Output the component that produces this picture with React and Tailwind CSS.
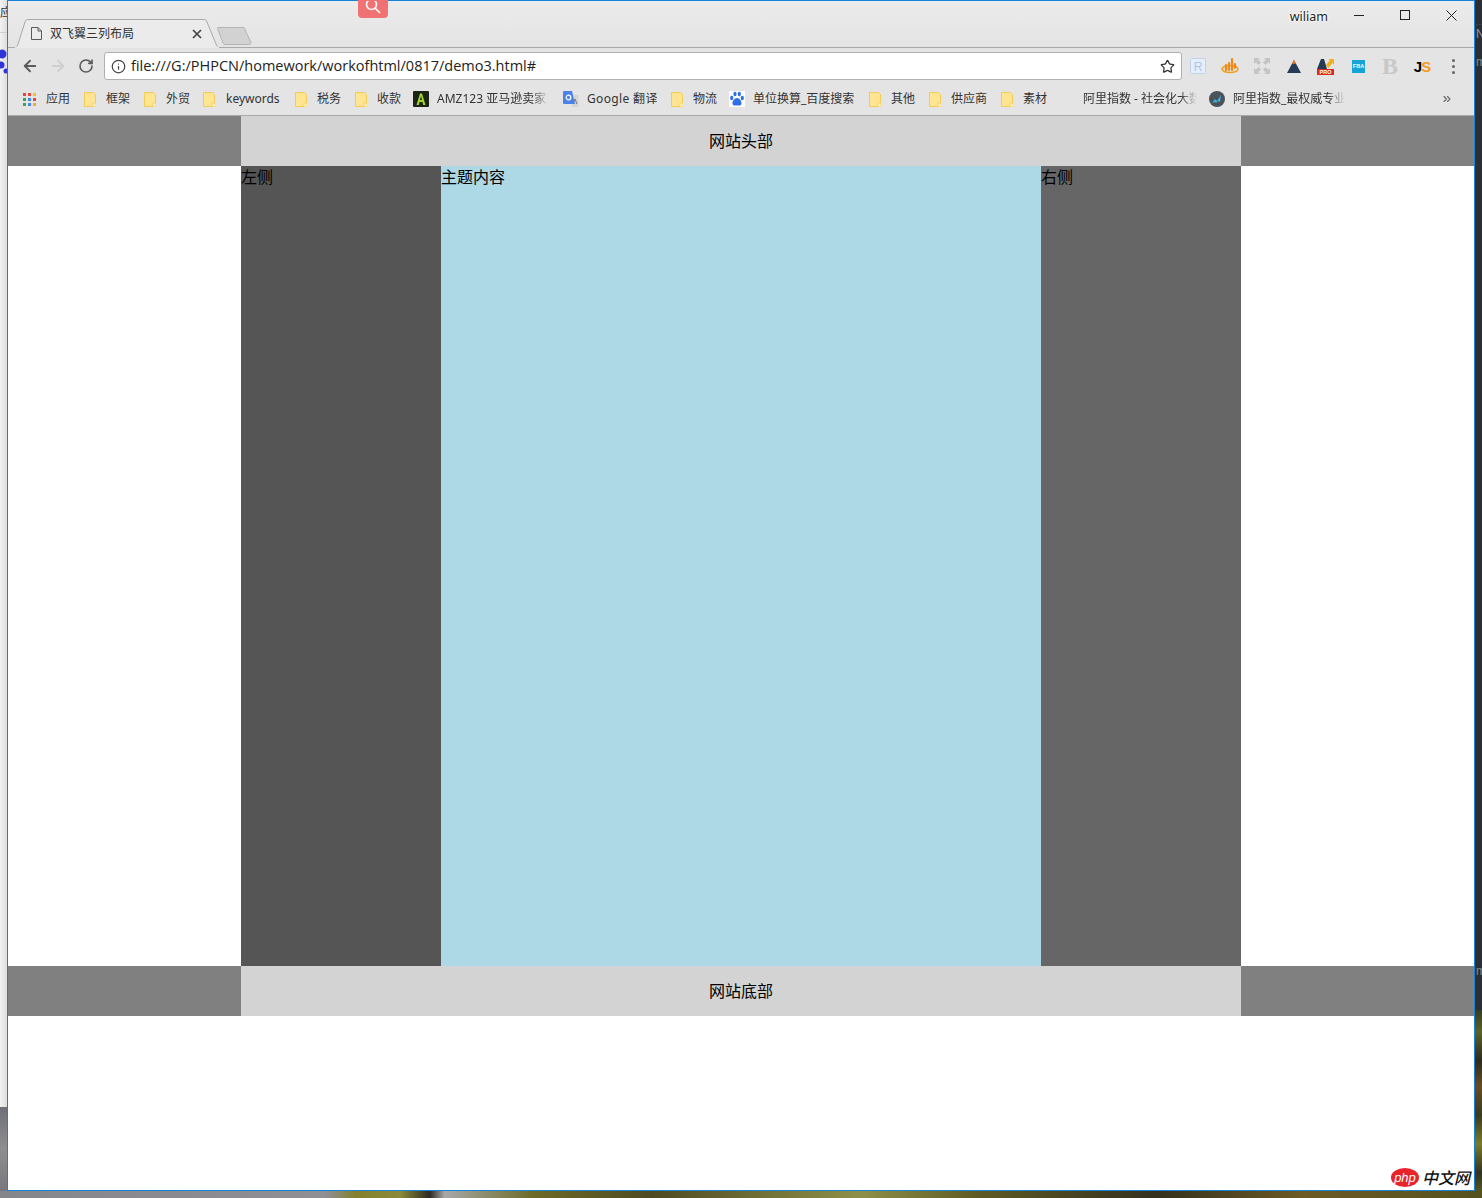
import React from 'react';
import { ArrowLeft, ArrowRight, RotateCw, Info, Star, ChevronsRight } from 'lucide-react';

const BOOKMARKS = [
  { icon: 'apps', label: '应用', ml: 'ml-[15px]', w: 'w-[24px]', gap: 'ml-[10px]' },
  { icon: 'folder', label: '框架', ml: 'ml-[14px]', w: 'w-[24px]', gap: 'ml-[10px]' },
  { icon: 'folder', label: '外贸', ml: 'ml-[14px]', w: 'w-[24px]', gap: 'ml-[10px]' },
  { icon: 'folder', label: 'keywords', ml: 'ml-[13px]', w: 'w-[55px]', gap: 'ml-[11px]' },
  { icon: 'folder', label: '税务', ml: 'ml-[14px]', w: 'w-[24px]', gap: 'ml-[10px]' },
  { icon: 'folder', label: '收款', ml: 'ml-[14px]', w: 'w-[24px]', gap: 'ml-[10px]' },
  { icon: 'amz', label: 'AMZ123 亚马逊卖家', ml: 'ml-[12px]', w: 'w-[112px]', gap: 'ml-[8px]', fade: true },
  { icon: 'translate', label: 'Google 翻译', ml: 'ml-[14px]', w: 'w-[70px]', gap: 'ml-[8px]', extra: 'tracking-[0.35px]' },
  { icon: 'folder', label: '物流', ml: 'ml-[14px]', w: 'w-[24px]', gap: 'ml-[10px]' },
  { icon: 'paw', label: '单位换算_百度搜索', ml: 'ml-[12px]', w: 'w-[102px]', gap: 'ml-[8px]' },
  { icon: 'folder', label: '其他', ml: 'ml-[14px]', w: 'w-[24px]', gap: 'ml-[10px]' },
  { icon: 'folder', label: '供应商', ml: 'ml-[14px]', w: 'w-[36px]', gap: 'ml-[10px]' },
  { icon: 'folder', label: '素材', ml: 'ml-[14px]', w: 'w-[24px]', gap: 'ml-[10px]' },
  { icon: 'blank', label: '阿里指数 - 社会化大数', ml: 'ml-[12px]', w: 'w-[114px]', gap: 'ml-[8px]', fade: true },
  { icon: 'ali', label: '阿里指数_最权威专业', ml: 'ml-[12px]', w: 'w-[112px]', gap: 'ml-[8px]', fade: true },
];

const APP_DOTS = [
  'bg-[#e8453c]', 'bg-[#e8453c]', 'bg-[#f9bb2d]',
  'bg-[#34a853]', 'bg-[#4285f4]', 'bg-[#e8453c]',
  'bg-[#34a853]', 'bg-[#4285f4]', 'bg-[#f9a825]',
];

function Folder() {
  return (
    <svg width="12" height="15" viewBox="0 0 12 15" className="shrink-0">
      <path d="M.5.5h9l2 2v12H.5z" fill="#ffe592" stroke="#f3cb55" />
      <rect x="9" y="11" width="3" height="4" fill="#fff3c4" stroke="#f3cb55" strokeWidth=".8" />
    </svg>
  );
}

function BookmarkIcon({ type }) {
  if (type === 'folder') return <span className="flex w-[12px] shrink-0"><Folder /></span>;
  if (type === 'apps') {
    return (
      <span className="grid h-[13px] w-[13px] shrink-0 grid-cols-3 gap-[2px]">
        {APP_DOTS.map((c, i) => <span key={i} className={`h-[3px] w-[3px] ${c}`} />)}
      </span>
    );
  }
  if (type === 'amz') {
    return (
      <svg width="16" height="16" viewBox="0 0 16 16" className="shrink-0">
        <rect width="16" height="16" rx="1" fill="#1c2416" />
        <path d="M3.5 14 7 2.500h2L12.500 14h-2.300L9.500 11h-3l-.7 3zM7 9h2L8 5z" fill="#a4d52c" />
      </svg>
    );
  }
  if (type === 'translate') {
    return (
      <svg width="16" height="16" viewBox="0 0 16 16" className="shrink-0">
        <path d="M7 4h8.500v12H9z" fill="#d5d5d5" />
        <path d="M12 8l-2 5M12 8l2 5" stroke="#777" strokeWidth="1" />
        <path d="M1 0h8l3 13H1a1 1 0 0 1-1-1V1a1 1 0 0 1 1-1z" fill="#4a82e8" />
        <circle cx="5.500" cy="6.500" r="2.300" fill="none" stroke="#fff" strokeWidth="1.200" />
      </svg>
    );
  }
  if (type === 'paw') {
    return (
      <svg width="16" height="16" viewBox="0 0 16 16" className="shrink-0">
        <rect width="16" height="16" fill="#fff" />
        <ellipse cx="6" cy="3" rx="1.600" ry="2.200" fill="#2f6fe8" />
        <ellipse cx="10.300" cy="3" rx="1.600" ry="2.200" fill="#2f6fe8" />
        <ellipse cx="2.700" cy="7" rx="1.600" ry="2.200" fill="#2f6fe8" />
        <ellipse cx="13.300" cy="7" rx="1.600" ry="2.200" fill="#2f6fe8" />
        <path d="M8 7c-2.500 0-5 3.500-4.500 5.800C4 15 6.500 14.500 8 14.500s4 .5 4.500-1.700C13 10.500 10.500 7 8 7z" fill="#2f6fe8" />
      </svg>
    );
  }
  if (type === 'ali') {
    return (
      <svg width="16" height="16" viewBox="0 0 16 16" className="shrink-0">
        <circle cx="8" cy="8" r="8" fill="#4b5358" />
        <path d="M3 12l3-4 2 2 4-6-1 7-2-1-2 2-1-1z" fill="#35b5e5" />
      </svg>
    );
  }
  return <span className="w-[16px] shrink-0" />;
}

function Extension({ children }) {
  return <div className="flex h-[32px] w-8 items-center justify-center">{children}</div>;
}

function Extensions() {
  return (
    <>
      <Extension>
        <svg width="16" height="16" viewBox="0 0 16 16">
          <rect x=".5" y=".5" width="15" height="15" rx="1" fill="#e6eefb" stroke="#bcd2ee" />
          <text x="8" y="12.500" textAnchor="middle" fontSize="12" fontFamily="Liberation Sans" fill="#a9c6ee">R</text>
        </svg>
      </Extension>
      <Extension>
        <svg width="18" height="18" viewBox="0 0 18 18">
          <ellipse cx="9" cy="12" rx="8" ry="3.500" fill="none" stroke="#f0a021" strokeWidth="1.600" />
          <path d="M5 13V8M8 13V6M11 13V2M14 11V7" stroke="#f0891a" strokeWidth="2.200" strokeLinecap="round" />
        </svg>
      </Extension>
      <Extension>
        <svg width="16" height="16" viewBox="0 0 16 16" fill="#c4c4c4">
          <path d="M0 0h6L4.200 1.800 7 4.600 4.600 7 1.800 4.200 0 6zM16 0v6l-1.800-1.800L11.400 7 9 4.600l2.800-2.800L10 0zM0 16v-6l1.800 1.800L4.600 9 7 11.400l-2.800 2.800L6 16zM16 16h-6l1.800-1.800L9 11.400 11.400 9l2.800 2.800L16 10z" />
        </svg>
      </Extension>
      <Extension>
        <svg width="14" height="13" viewBox="0 0 14 13">
          <path d="M7 0l7 13H0z" fill="#263a55" />
          <path d="M7 0l2 3.800H5z" fill="#f0792a" />
        </svg>
      </Extension>
      <Extension>
        <svg width="18" height="18" viewBox="0 0 18 18">
          <path d="M0 12L4 2h3l3 10z" fill="#263a55" />
          <path d="M9 8l4-5-2-1h6v6l-1.500-2-4 5z" fill="#f2b01e" />
          <rect y="12" width="17" height="6" fill="#d9281c" />
          <text x="8.500" y="17" textAnchor="middle" fontSize="5.500" fontWeight="700" fontFamily="Liberation Sans" fill="#fff">PRO</text>
        </svg>
      </Extension>
      <Extension>
        <svg width="13" height="13" viewBox="0 0 13 13">
          <rect width="13" height="13" fill="#16a3d8" />
          <text x="6.500" y="7.500" textAnchor="middle" fontSize="5.500" fontWeight="700" fontFamily="Liberation Sans" fill="#fff">FBA</text>
        </svg>
      </Extension>
      <Extension>
        <span className="font-['Liberation_Serif',serif] text-[24px] font-bold leading-none text-[#c8c8c8]">B</span>
      </Extension>
      <Extension>
        <span className="font-['Liberation_Sans',sans-serif] text-[15px] font-bold leading-none tracking-[-1px] text-black">J<span className="text-[#f49b1b]">S</span></span>
      </Extension>
    </>
  );
}

function TitleBar() {
  return (
    <div className="flex h-[47px] bg-gradient-to-b from-[#ebebeb] to-[#e4e4e4] border-b border-[#a9a9a9]">
      <div className="relative ml-[6px] mt-[18px] flex h-[29px] w-[206px] items-center">
        <svg width="206" height="29" viewBox="0 0 206 29" className="absolute left-0 top-0">
          <path d="M0 28.500C2 28.500 3 28 4 25L11 3C11.500 1.500 12.500 .5 14 .5H190C191.500 .5 192.500 1.500 193 3L202 25C203 28 204 28.500 206 28.500Z" fill="#ebebeb" stroke="#a9a9a9" />
          <path d="M1 28.500H205" stroke="#ebebeb" strokeWidth="1.500" />
        </svg>
        <svg width="11" height="13" viewBox="0 0 11 13" fill="none" stroke="#5a5a5a" className="relative ml-[17px]">
          <path d="M.5.5h6.500l3.500 3.500v8.500H.5zM7 .5V4h3.500" />
        </svg>
        <span className="relative ml-[8px] w-[90px] whitespace-nowrap text-[12px] leading-none text-[#333]">双飞翼三列布局</span>
        <svg width="10" height="10" viewBox="0 0 10 10" stroke="#444" strokeWidth="1.700" className="relative ml-[52px]">
          <path d="M1 1l8 8M9 1l-8 8" />
        </svg>
      </div>
      <svg width="36" height="18" viewBox="0 0 36 18" className="ml-[-4px] mt-[26px]">
        <path d="M1.500 1.500Q1 .5 3 .5H28L35 15.500Q35 17.500 33 17.500H9Q7.500 17.500 7 16Z" fill="#d2d2d2" stroke="#b4b4b4" />
      </svg>
      <div className="ml-auto flex items-start">
        <span className="mt-[9px] font-['Noto_Sans',sans-serif] text-[12.5px] leading-[14px] text-[#222] [text-shadow:0_0_2px_#fff,0_0_3px_#fff,0_0_3px_#fff]">wiliam</span>
        <svg width="11" height="11" viewBox="0 0 11 11" stroke="#222" className="ml-[26px] mt-[9px]"><path d="M0 5.500h10" /></svg>
        <svg width="11" height="11" viewBox="0 0 11 11" fill="none" stroke="#222" className="ml-[35px] mt-[9px]"><rect x=".5" y=".5" width="9" height="9" /></svg>
        <svg width="11" height="11" viewBox="0 0 11 11" stroke="#222" className="ml-[35px] mr-[17px] mt-[9px]"><path d="M.5.5l10 10M10.500.5l-10 10" /></svg>
      </div>
    </div>
  );
}

function Toolbar() {
  return (
    <div className="flex h-[34px] items-center bg-[#e4e4e4] pl-2 pt-[2px]">
      <button className="flex w-7 justify-center text-[#5a5a5a]"><ArrowLeft size={18} strokeWidth={2.4} /></button>
      <button className="flex w-7 justify-center text-[#cfcfcf]"><ArrowRight size={18} strokeWidth={2.4} /></button>
      <button className="flex w-7 justify-center text-[#5a5a5a]"><RotateCw size={16} strokeWidth={2.4} /></button>
      <div className="ml-1 flex h-[28px] w-[1078px] items-center rounded-[3px] border border-[#b0b0b0] bg-white pl-[6px] pr-[6px]">
        <Info size={15} strokeWidth={2} className="text-[#444]" />
        <span className="ml-[5px] font-['Open_Sans',sans-serif] text-[14.5px] leading-none text-[#222]">file:///G:/PHPCN/homework/workofhtml/0817/demo3.html#</span>
        <Star size={15} strokeWidth={2} className="ml-auto text-[#333]" />
      </div>
      <Extensions />
      <div className="flex w-[30px] flex-col items-center gap-[3px]">
        <span className="h-[3px] w-[3px] rounded-full bg-[#666]" />
        <span className="h-[3px] w-[3px] rounded-full bg-[#666]" />
        <span className="h-[3px] w-[3px] rounded-full bg-[#666]" />
      </div>
    </div>
  );
}

function Bookmarks() {
  return (
    <div className="flex h-[34px] items-center border-b border-[#a9a9a9] bg-[#e4e4e4] pt-[1px]">
      {BOOKMARKS.map((b) => (
        <div key={b.label} className={`flex items-center ${b.ml}`}>
          <BookmarkIcon type={b.icon} />
          <span
            className={`overflow-hidden whitespace-nowrap text-[12px] leading-[16px] text-[#333] ${b.w} ${b.gap} ${b.extra || ''} ${b.fade ? '[mask-image:linear-gradient(to_right,#000_85%,transparent)]' : ''}`}
          >
            {b.label}
          </span>
        </div>
      ))}
      <ChevronsRight size={12} strokeWidth={2.2} className="ml-[96px] text-[#666]" />
    </div>
  );
}

function PageBand({ label }) {
  return (
    <div className="flex h-[50px] justify-center bg-[#808080]">
      <div className="w-[1000px] bg-[#d3d3d3] text-center leading-[50px]">{label}</div>
    </div>
  );
}

function Page() {
  return (
    <div className="relative flex-1 bg-white text-[16px] text-black">
      <PageBand label="网站头部" />
      <div className="mx-auto flex h-[800px] w-[1000px] leading-[22px]">
        <div className="w-[200px] bg-[#555555]">左侧</div>
        <div className="flex-1 bg-[#add8e6]">主题内容</div>
        <div className="w-[200px] bg-[#666666]">右侧</div>
      </div>
      <PageBand label="网站底部" />
      {/* site watermark in the corner of the shot */}
      <div className="absolute bottom-[3px] right-[4px] flex items-center">
        <span className="flex h-[19px] w-[28px] items-center justify-center rounded-[50%] bg-[#e8232a] font-['Liberation_Sans',sans-serif] text-[13px] italic leading-none text-white">php</span>
        <span className="ml-[3px] text-[16px] font-medium italic leading-none text-[#111]">中文网</span>
      </div>
    </div>
  );
}

export default function App() {
  return (
    <div className="flex h-[1198px] w-[1482px] flex-col overflow-hidden font-['Noto_Sans','Noto_Sans_CJK_SC',sans-serif]">
      <div className="flex h-[1191px]">
        {/* edge of the window behind, left */}
        <div className="flex w-[7px] flex-col overflow-hidden bg-gradient-to-r from-[#f2f2f2] to-[#dedede]">
          <div className="h-[33px] whitespace-nowrap border-b border-[#cfcfcf] pt-[5px] text-[12px] leading-[16px] text-[#333]">应</div>
          <svg width="7" height="28" viewBox="0 0 7 28" className="mt-[14px] shrink-0" fill="#2f35d8">
            <circle cx="2" cy="7" r="4.500" />
            <circle cx="1" cy="18" r="3.500" />
            <circle cx="6" cy="24" r="2.500" />
          </svg>
          <div className="mt-auto h-[84px] bg-[linear-gradient(to_bottom,#6f6f78,#8d8d92_50%,#77777e)]" />
        </div>

        <div className="flex w-[1468px] flex-col border border-[#1683d8]">
          <TitleBar />
          <Toolbar />
          <Bookmarks />
          <Page />
          <div className="absolute left-[358px] top-0 flex h-[18px] w-[30px] items-center justify-center rounded-b-[4px] bg-[#f07272]">
            <svg width="16" height="16" viewBox="0 0 16 16" fill="none" stroke="#fff" strokeWidth="1.600"><circle cx="6.500" cy="3.500" r="5" /><path d="M10 7l5 5" /></svg>
          </div>
        </div>

        {/* edge of the window behind, right */}
        <div className="flex w-[7px] flex-col overflow-hidden bg-[#2c2e31]">
          <div className="h-[1010px] pl-[1px] font-['Liberation_Sans',sans-serif] leading-none">
            <div className="h-[25px] border-b border-[#3a3c40]" />
            <div className="mt-[3px] text-[12px] text-[#8a97a8]">N</div>
            <div className="mt-[16px] text-[12px] text-[#8a8a80]">m</div>
            <div className="mt-[897px] text-[12px] text-[#8a8a80]">m</div>
          </div>
          <div className="flex-1 bg-[linear-gradient(to_bottom,#3a3a20,#5c6226_12%,#2f2a1c_28%,#6b4a22_42%,#3c3a1e_58%,#7a7a2a_74%,#35321f_90%,#54561f)]" />
        </div>
      </div>

      {/* wallpaper strip under the window */}
      <div className="h-[7px] bg-[linear-gradient(to_right,#85858c_0%,#8f8f94_22%,#84802c_24%,#8c8a3a_27%,#2f2a22_29%,#a8a8a8_30%,#6d6a26_36%,#4f4a22_44%,#8f9048_58%,#5f5a24_66%,#35301e_78%,#6d5a24_88%,#55521f_100%)]" />
    </div>
  );
}
